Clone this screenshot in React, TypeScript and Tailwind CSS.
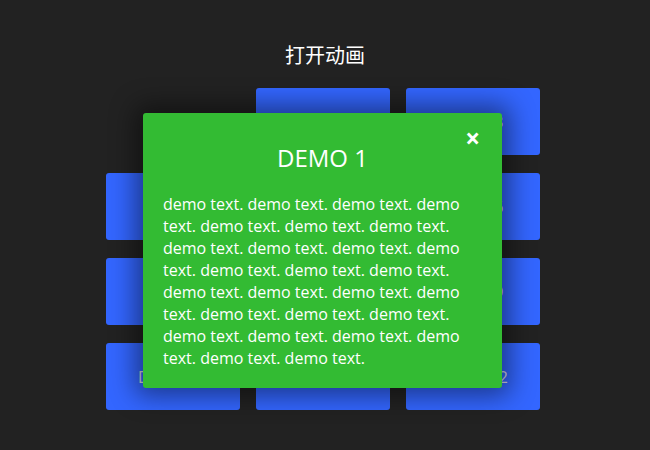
const demos = Array.from({ length: 12 }, (_, i) => `DEMO ${i + 1}`);

const body = Array.from({ length: 27 }, () => 'demo text.').join(' ');

export default function App() {
  return (
    <div
      className="relative min-h-[450px] w-full bg-[#222222] pt-[42px]"
      style={{ fontFamily: '"Open Sans", "Noto Sans CJK SC", sans-serif' }}
    >
      <h1 className="text-center text-[20px] leading-[28px] text-white">打开动画</h1>

      <div className="mt-[18px] grid w-[434px] grid-cols-3 gap-x-[16px] gap-y-[18px] ml-[106px]">
        {demos.map((name, i) => (
          <button
            key={name}
            className={
              i === 0
                ? 'invisible h-[67px] rounded-[3px]'
                : 'h-[67px] rounded-[3px] bg-[#3366ff] text-[16px] text-[#d8d8e8]'
            }
          >
            {name}
          </button>
        ))}
      </div>

      {/* modal expanded from DEMO 1 */}
      <div className="absolute left-[143px] top-[113px] w-[359px] rounded-[3px] bg-[#33bb33] px-[20px] pb-[19px] pt-[29px] text-white shadow-[0_0_26px_8px_rgba(0,0,0,0.45)]">
        <button className="absolute right-[22px] top-[12px] text-[26px] font-bold leading-none text-white">
          ×
        </button>
        <h2 className="text-center text-[24px] leading-[32px]">DEMO 1</h2>
        <p className="mt-[19px] text-[16px] leading-[22px]">{body}</p>
      </div>
    </div>
  );
}
